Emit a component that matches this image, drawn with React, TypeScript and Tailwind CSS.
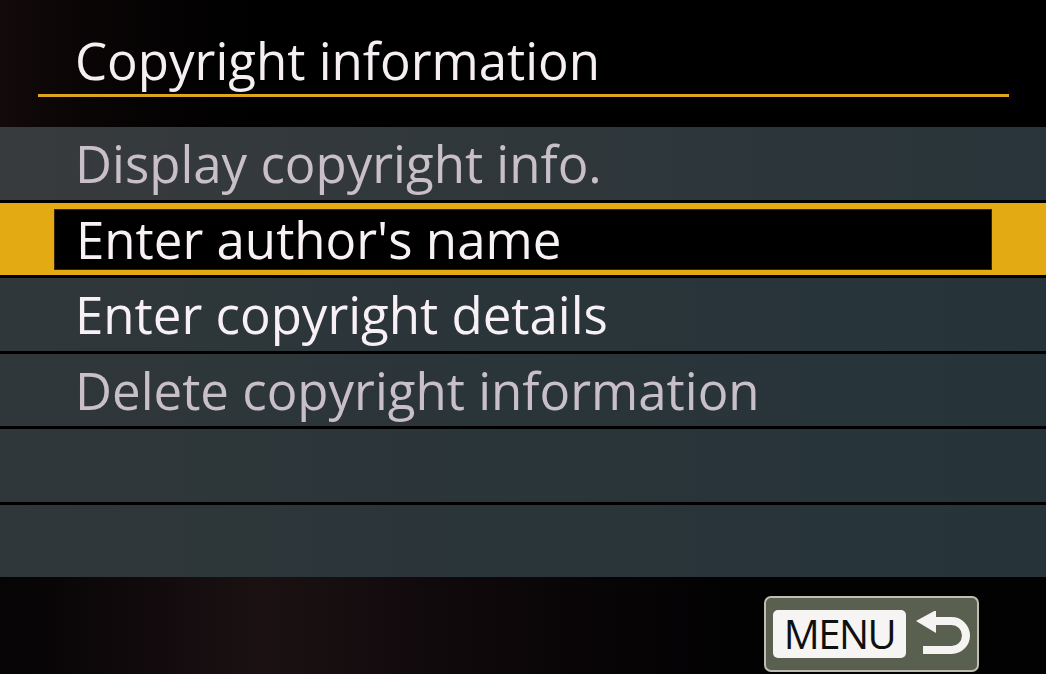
import React from 'react';

// カメラのメニュー画面：著作権情報
const ITEMS: { label: string; disabled?: boolean; selected?: boolean }[] = [
  { label: 'Display copyright info.', disabled: true },
  { label: "Enter author's name", selected: true },
  { label: 'Enter copyright details' },
  { label: 'Delete copyright information', disabled: true },
  { label: '' },
  { label: '' },
];

function ReturnArrow() {
  return (
    <svg width="57" height="46" viewBox="0 0 57 46" aria-hidden>
      <path d="M1 10 L21 -1 L21 22 Z" fill="#f6f3f3" />
      <path d="M18 10 H36.5 A14.5 14.5 0 0 1 36.5 39 H8" fill="none" stroke="#f6f3f3" strokeWidth="8" />
    </svg>
  );
}

function MenuButton() {
  return (
    <div className="flex items-center gap-[9px] w-[215px] h-[76px] pl-[7px] rounded-[7px] border-2 border-[#bdbdb4] bg-[#5a604f]">
      <span className="flex items-center justify-center w-[133px] h-[48px] rounded-[5px] bg-[#f7f4f4] text-[#101010] text-[40px] font-medium leading-none tracking-[-1.5px]">
        MENU
      </span>
      <ReturnArrow />
    </div>
  );
}

export default function App() {
  return (
    <div
      className="w-[1046px] h-[674px] overflow-hidden bg-black flex flex-col"
      style={{ fontFamily: '"Open Sans", "Noto Sans", sans-serif' }}
    >
      {/* タイトル */}
      <div className="pt-[35px] pl-[75px] text-[51px] leading-[51px] text-[#f5eff3] bg-linear-to-r from-[#120a0b] via-black via-40% to-black">
        Copyright information
        <div className="mt-[8px] -ml-[37px] w-[971px] h-[3px] bg-[#dba51e]" />
        <div className="h-[30px]" />
      </div>

      {/* メニュー項目 */}
      <div className="flex flex-col gap-[3px]">
        {ITEMS.map((item, i) =>
          item.selected ? (
            <div key={i} className="h-[72.5px] pt-[6px] pb-[5px] px-[54px] bg-[#e3aa14]">
              <div className="h-full pl-[21px] bg-black border border-[#3a2606] text-[51px] leading-[59px] text-[#f7f0f5]">
                {item.label}
              </div>
            </div>
          ) : (
            <div
              key={i}
              className={`h-[72.5px] pl-[75px] text-[51px] leading-[72px] bg-linear-to-r ${
                i < 2 ? 'from-[#383b3e] via-[#2f373a] to-[#29353a]' : 'from-[#30373a] via-[#2a3539] to-[#263439]'
              } ${item.disabled ? 'text-[#c8bfc9]' : 'text-[#f7f0f5]'}`}
            >
              {item.label}
            </div>
          ),
        )}
      </div>

      {/* 下部：MENU 戻るボタン */}
      <div className="flex-1 flex justify-end items-start pt-[19px] pr-[67px] bg-linear-to-r from-[#060405] via-[#1b1113] via-25% to-[#030203] to-70%">
        <MenuButton />
      </div>
    </div>
  );
}
